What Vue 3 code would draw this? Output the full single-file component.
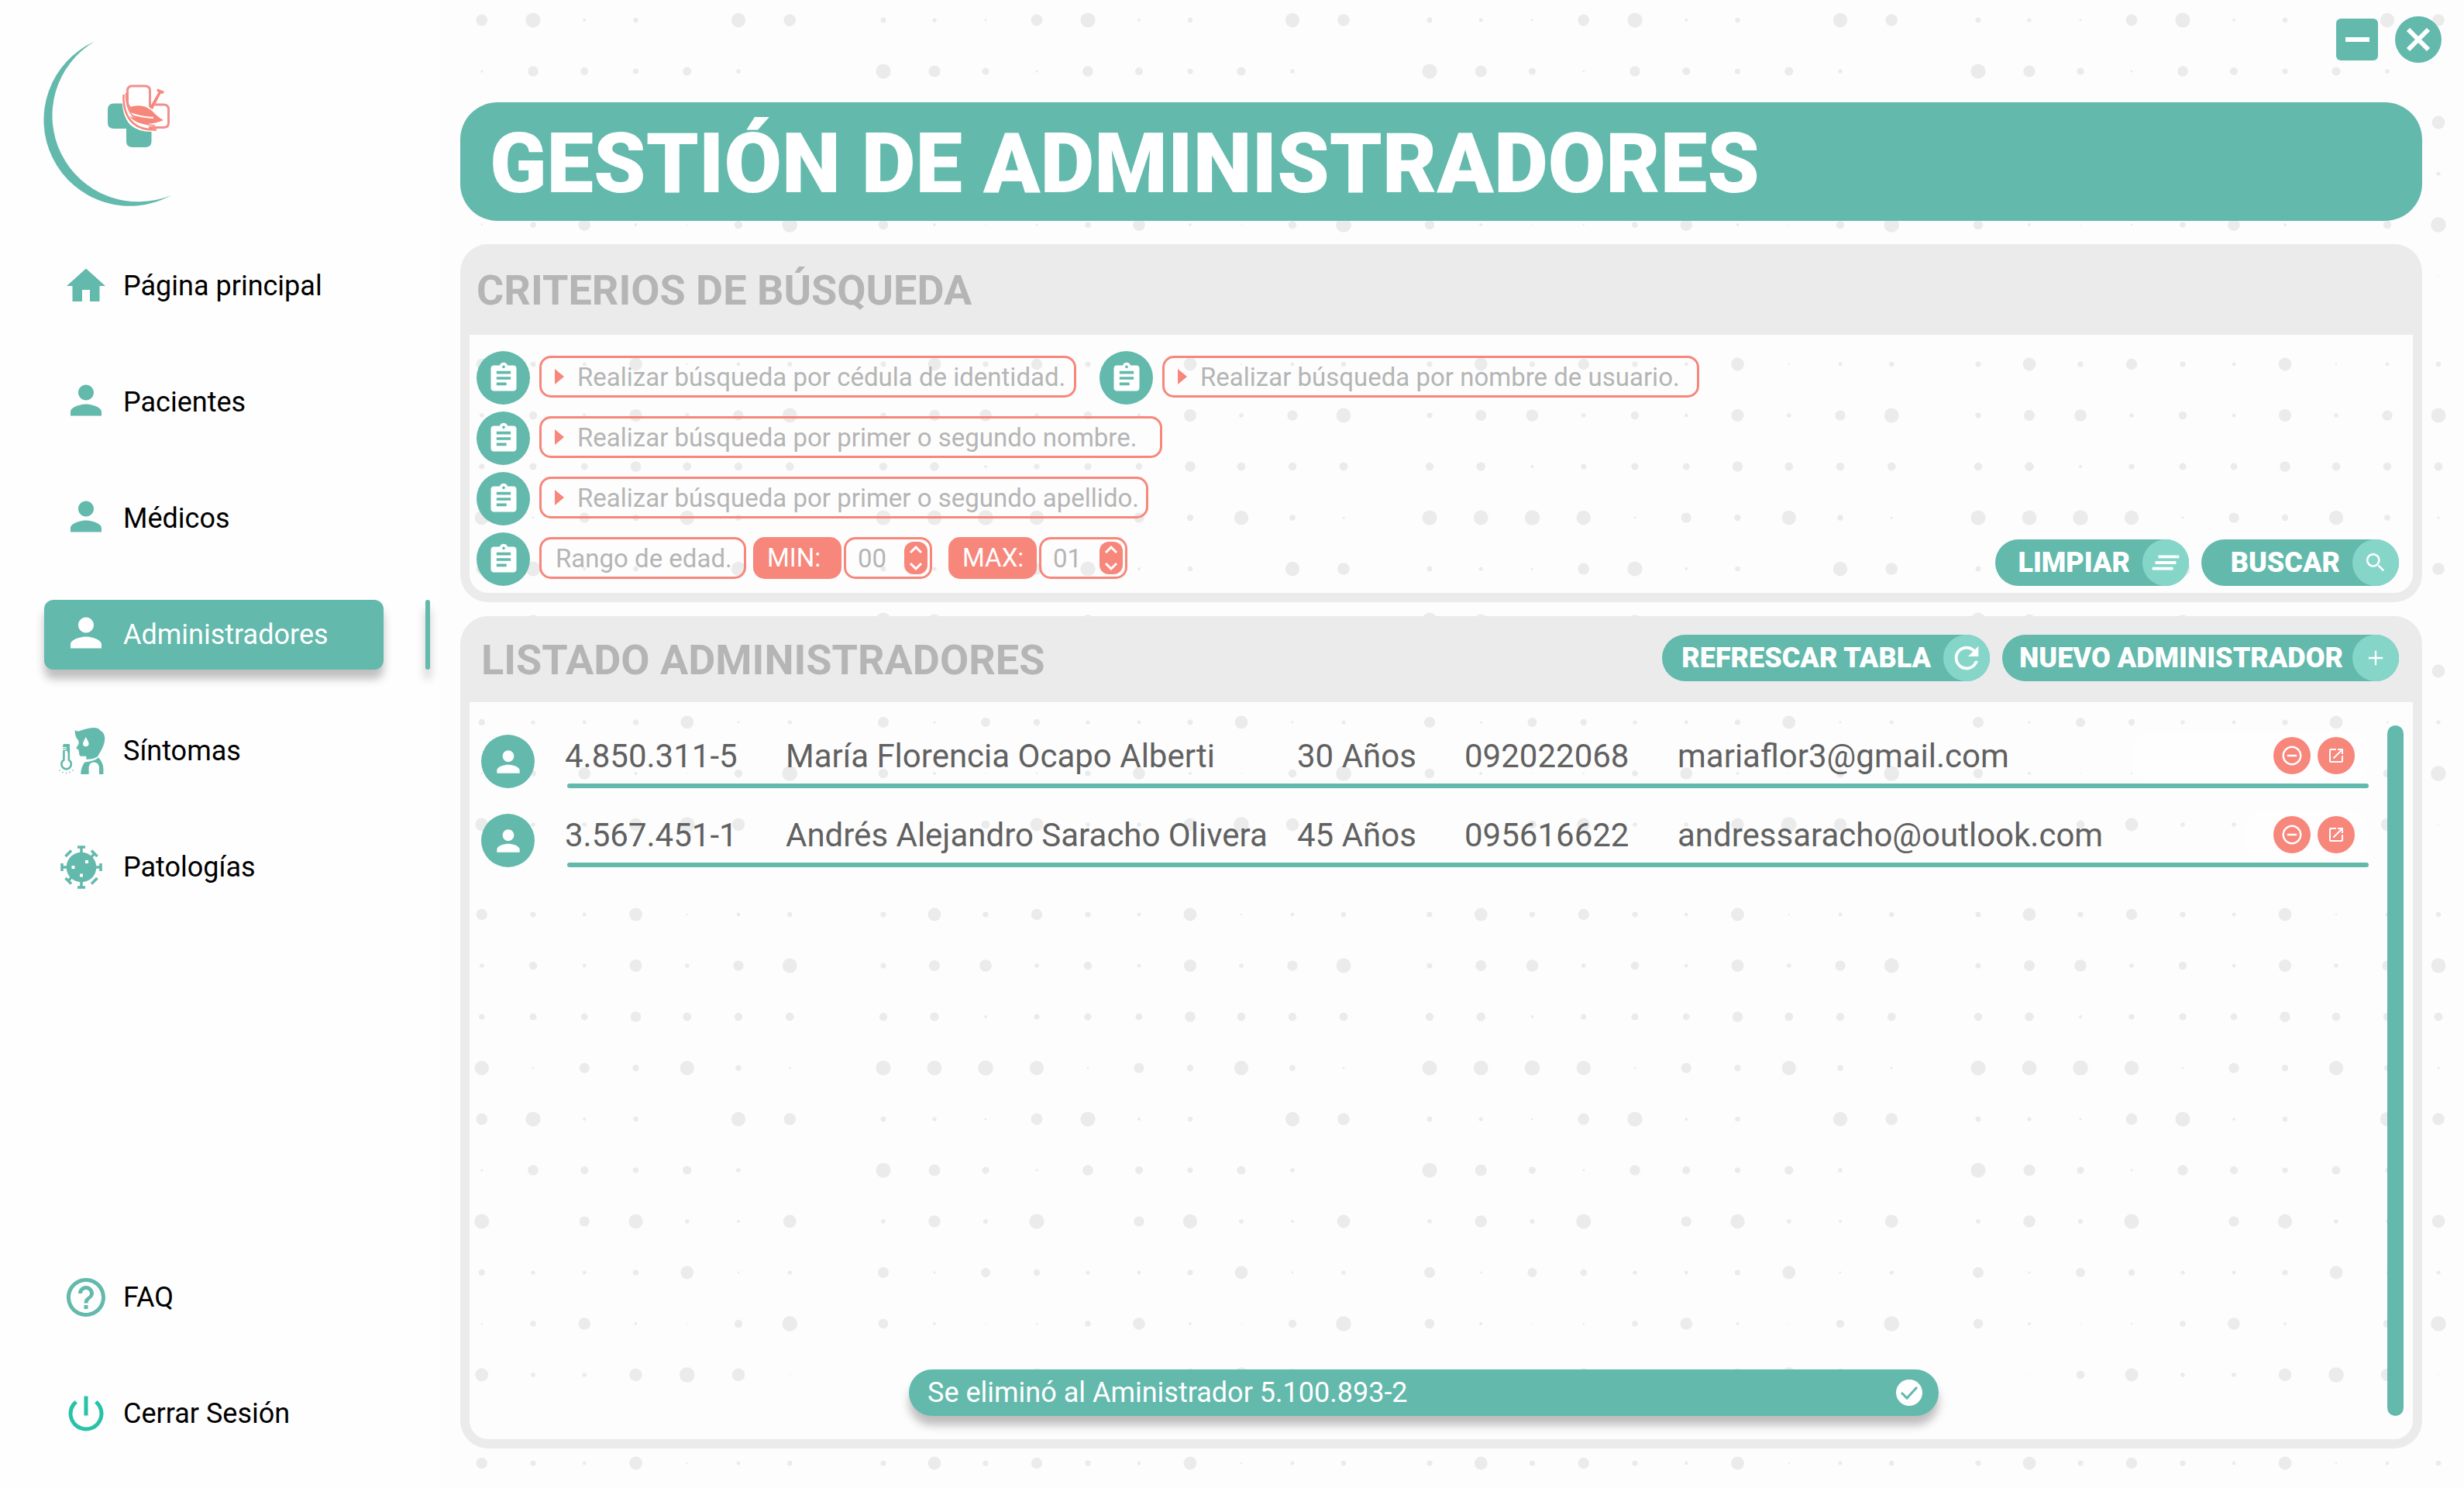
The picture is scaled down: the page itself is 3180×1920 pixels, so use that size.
<script setup>
import { ref } from 'vue'

const menu = [
  { label: 'Página principal', icon: 'home' },
  { label: 'Pacientes', icon: 'person' },
  { label: 'Médicos', icon: 'person' },
  { label: 'Administradores', icon: 'person', active: true },
  { label: 'Síntomas', icon: 'symptom' },
  { label: 'Patologías', icon: 'virus' },
]

const footerMenu = [
  { label: 'FAQ', icon: 'help' },
  { label: 'Cerrar Sesión', icon: 'power' },
]

const searchRows = [
  [
    { id: 'cedula', hint: 'Realizar búsqueda por cédula de identidad.', size: 'medium' },
    { id: 'usuario', hint: 'Realizar búsqueda por nombre de usuario.', size: 'medium' },
  ],
  [{ id: 'nombre', hint: 'Realizar búsqueda por primer o segundo nombre.', size: 'large' }],
  [{ id: 'apellido', hint: 'Realizar búsqueda por primer o segundo apellido.', size: 'wide' }],
]

const admins = [
  { id: '4.850.311-5', name: 'María Florencia Ocapo Alberti', age: '30 Años', phone: '092022068', email: 'mariaflor3@gmail.com' },
  { id: '3.567.451-1', name: 'Andrés Alejandro Saracho Olivera', age: '45 Años', phone: '095616622', email: 'andressaracho@outlook.com' },
]

const filters = ref({ cedula: '', usuario: '', nombre: '', apellido: '', min: '', max: '' })

const paths = {
  home: 'M10 20v-6h4v6h5v-8h3L12 3 2 12h3v8z',
  person: 'M12 12c2.21 0 4-1.79 4-4s-1.79-4-4-4-4 1.79-4 4 1.79 4 4 4zm0 2c-2.67 0-8 1.34-8 4v2h16v-2c0-2.66-5.33-4-8-4z',
  help: 'M11 18h2v-2h-2v2zm1-16C6.48 2 2 6.48 2 12s4.48 10 10 10 10-4.48 10-10S17.52 2 12 2zm0 18c-4.41 0-8-3.59-8-8s3.59-8 8-8 8 3.59 8 8-3.59 8-8 8zm0-14c-2.21 0-4 1.79-4 4h2c0-1.1.9-2 2-2s2 .9 2 2c0 2-3 1.75-3 5h2c0-2.25 3-2.5 3-5 0-2.21-1.79-4-4-4z',
  power: 'M13 3h-2v10h2V3zm4.83 2.17l-1.42 1.42A6.92 6.92 0 0 1 19 12c0 3.87-3.13 7-7 7A6.995 6.995 0 0 1 7.58 6.58L6.17 5.17A8.932 8.932 0 0 0 3 12a9 9 0 0 0 18 0c0-2.74-1.23-5.18-3.17-6.83z',
  clipboard: 'M19 3h-4.18C14.4 1.84 13.3 1 12 1c-1.3 0-2.4.84-2.82 2H5c-1.1 0-2 .9-2 2v14c0 1.1.9 2 2 2h14c1.1 0 2-.9 2-2V5c0-1.1-.9-2-2-2zm-7 0c.55 0 1 .45 1 1s-.45 1-1 1-1-.45-1-1 .45-1 1-1zm2 14H7v-2h7v2zm3-4H7v-2h10v2zm0-4H7V7h10v2z',
}

// Halftone backdrop: one 10x10 block of dots repeated over the main area.
const radii = [
  [9, 21, 9, 18, 9, 6, 21, 3, 6, 8],
  [9, 17.5, 19.5, 7, 13, 6, 20, 7, 16.5, 23.5],
  [13, 14.5, 5, 9, 11.5, 11, 17, 13.5, 13, 13.5],
  [24, 23.5, 24.5, 23, 3.5, 16.5, 10.5, 23, 9.5, 4],
  [8.5, 6.5, 4, 18.5, 24, 5, 8, 1.5, 23, 19.5],
  [24, 19, 11.5, 4, 17, 12.5, 9, 14, 7, 0],
  [7, 19.5, 7.5, 24, 1, 16.5, 23, 7, 5, 21],
  [17.5, 4, 15, 10.5, 6.5, 6, 9, 21, 3.5, 6.5],
  [15.5, 5, 2, 3, 9.5, 19.5, 5, 2, 13, 24.5],
  [0, 2, 13.5, 21, 7, 7, 20.5, 24.5, 20.5, 2],
]
const blockColumns = [
  { x: -143, step: 66.25 },
  { x: 574, step: 66 },
  { x: 1279, step: 66.25 },
  { x: 1987, step: 66 },
]
const blockRows = [-238, 470, 1180, 1888]
const dots = blockColumns.flatMap((col) =>
  blockRows.flatMap((top) =>
    radii.flatMap((line, row) =>
      line.map((r, i) => ({ x: col.x + i * col.step, y: top + row * 66, r: r * 0.4 }))
    )
  )
).filter((d) => d.r > 0 && d.x > 0 && d.y > 0)
</script>

<template>
  <div class="app">
    <aside class="sidebar">
      <svg class="logo" viewBox="0 0 280 280" role="img" aria-label="Logotipo">
        <path class="teal" d="M122 53.500A111 111 0 1 0 221 252A111.200 111.200 0 0 1 122 53.500z" />
        <path class="teal" d="M147 133.500H170V158H195.500V182Q195.500 190 187.500 190H171Q163 190 163 182V166H147Q139 166 139 158V141.500Q139 133.500 147 133.500z" />
        <path fill="#fff" d="M158 122L164 108H198V133H218V166.500L204 169.500Q180 172 168 161Q156 148 158 122z" />
        <g fill="none" stroke="#f0908b" stroke-width="3">
          <path d="M168 139Q164.500 136 164.500 131V117Q164.500 111 170.500 111H187.500Q193.500 111 193.500 117V138" />
          <path d="M200 135H211Q217.500 135 217.500 141V158.500Q217.500 164.500 211 164.500H193.500V168" />
        </g>
        <path class="coral" d="M167 138.500Q178 134.500 188 138Q195 141 200 147Q205 152 211 155Q203 159 190 160Q175 160 167 150Q172 152 175 152Q166 146 167 138.500z" />
        <path fill="none" stroke="#fff" stroke-width="2" d="M168 146Q180 151 198 152" />
        <path class="coral" d="M203 114.500L212 118L210.500 121L207.500 120.500L197 141L193 139L204.500 119L202.500 117.500z" />
        <path fill="none" stroke="#f7867b" stroke-width="2.500" d="M159.500 122Q158.500 147 172 159Q182 168 202 167.500" />
        <path fill="none" stroke="#f7867b" stroke-width="1.500" d="M162.500 120Q162 140 173 152Q182 161 200 162" />
      </svg>

      <nav class="menu" aria-label="Principal">
        <div v-for="item in menu" :key="item.label" class="menu-row" :class="{ active: item.active }">
          <a href="#" class="menu-link" :aria-current="item.active ? 'page' : undefined">
            <svg v-if="item.icon === 'symptom'" class="menu-icon" viewBox="5 0 60 60" aria-hidden="true">
              <path d="M20.700 2.900Q23 4.800 26 4.500Q35 .5 45 0Q51 0 53 3.200Q59 6 59.300 13.600Q59.500 23 49.700 37.500Q45 40.500 35.600 41L35.200 36.800H28.500Q26 36 26 31.400L25.300 28.600 22.200 26.500 25.600 20.700 25.300 16.400Q20.500 12 20.700 2.900zM34.800 12Q30.800 19 31 20.500A3.800 3.800 0 0 0 38.600 20.500Q38.800 19 34.800 12z" fill-rule="evenodd" />
              <path d="M33.300 44.600Q45 43.500 51.300 38.600Q57.400 46 57.400 53V60H52V51Q51 44.600 45 44.600Q39.600 44.600 38.600 51V60H28.300Q28 52 33.300 44.600z" />
              <path fill="none" stroke="currentColor" stroke-width="2.600" d="M6.400 29V41.600A6.300 6.300 0 1 0 12.800 41.600V24" />
              <path d="M5.200 22.500Q5.200 21 7 21H14V32H11V30H5.500V28.700H10V27.500H5.200V26.200H10V25H5.200z" />
              <g>
                <circle cx="1" cy="55" r=".8" /><circle cx="5" cy="57.500" r=".8" /><circle cx="9.600" cy="58.500" r=".8" />
                <circle cx="14" cy="57.500" r=".8" /><circle cx="18" cy="55" r=".8" />
              </g>
            </svg>
            <svg v-else-if="item.icon === 'virus'" class="menu-icon" viewBox="-24 -30 60 60" aria-hidden="true">
              <circle r="19.300" />
              <g fill="none" stroke="currentColor" stroke-width="3.500">
                <path d="M-5 -26H5M0 -26V26M-5 26H5M-25 -5V5M-25 0H25M25 -5V5" />
                <path d="M-20.500 -14L-13 -21.500M20.500 14L13 21.500M13 -21.500L20.500 -14M17 -18L12 -12M-13 21.500L-20.500 14M-17 18L-12 12" />
              </g>
              <path fill="#fff" d="M5 -9h4v4h-4zM-12.500 -2h4v4h-4zM-2 8.500h4v4h-4z" />
            </svg>
            <svg v-else class="menu-icon" :viewBox="item.icon === 'person' ? '0 1 24 24' : '0 0 24 24'" aria-hidden="true">
              <path :d="paths[item.icon]" />
            </svg>
            {{ item.label }}
          </a>
          <span v-if="item.active" class="indicator"></span>
        </div>
      </nav>

      <nav class="menu menu-footer" aria-label="Sesión">
        <div v-for="item in footerMenu" :key="item.label" class="menu-row">
          <a href="#" class="menu-link">
            <svg class="menu-icon" :class="item.icon" viewBox="0 0 24 24" aria-hidden="true">
              <path :d="paths[item.icon]" />
            </svg>
            {{ item.label }}
          </a>
        </div>
      </nav>
    </aside>

    <main class="main">
      <svg class="backdrop" aria-hidden="true">
        <circle v-for="(d, i) in dots" :key="i" :cx="d.x" :cy="d.y" :r="d.r" />
      </svg>

      <div class="window-bar">
        <button type="button" class="window-btn minimize" aria-label="Minimizar">
          <svg viewBox="0 0 54 54"><path d="M12 27H43" /></svg>
        </button>
        <button type="button" class="window-btn close" aria-label="Cerrar">
          <svg viewBox="0 0 60 60"><path d="M17 17L43 43M43 17L17 43" /></svg>
        </button>
      </div>

      <div class="content">
        <h1 class="title">GESTIÓN DE ADMINISTRADORES</h1>

        <section class="panel">
          <header class="panel-head search-head">
            <h2>CRITERIOS DE BÚSQUEDA</h2>
          </header>
          <form class="search-body" @submit.prevent>
            <div class="fields">
              <div v-for="(row, i) in searchRows" :key="i" class="field-row">
                <div v-for="f in row" :key="f.id" class="field">
                  <span class="badge"><svg viewBox="0 0 24 24"><path :d="paths.clipboard" /></svg></span>
                  <label class="box" :class="f.size">
                    <svg class="caret" viewBox="0 0 12 20"><path d="M0 0L12 10L0 20z" /></svg>
                    <input v-model="filters[f.id]" type="text" :name="f.id" :placeholder="f.hint" :aria-label="f.hint" />
                  </label>
                </div>
              </div>
              <div class="field-row">
                <div class="field">
                  <span class="badge"><svg viewBox="0 0 24 24"><path :d="paths.clipboard" /></svg></span>
                  <span class="box range">Rango de edad.</span>
                </div>
                <div class="ages">
                  <div v-for="a in [{ id: 'min', label: 'MIN:', hint: '00' }, { id: 'max', label: 'MAX:', hint: '01' }]" :key="a.id" class="age">
                    <label class="tag" :for="a.id">{{ a.label }}</label>
                    <div class="box number">
                      <input :id="a.id" v-model="filters[a.id]" type="text" inputmode="numeric" :placeholder="a.hint" />
                      <div class="spinner">
                        <button type="button" aria-label="Aumentar"><svg viewBox="0 0 18 12"><path d="M2 10L9 3L16 10" /></svg></button>
                        <button type="button" aria-label="Disminuir"><svg viewBox="0 0 18 12"><path d="M2 2L9 9L16 2" /></svg></button>
                      </div>
                    </div>
                  </div>
                </div>
              </div>
            </div>
            <div class="actions">
              <button type="reset" class="pill limpiar">
                LIMPIAR
                <span class="pill-icon"><svg viewBox="0 0 24 24"><path d="M5 13h14v-2H5v2zm-2 4h14v-2H3v2zM7 7v2h14V7H7z" /></svg></span>
              </button>
              <button type="submit" class="pill buscar">
                BUSCAR
                <span class="pill-icon"><svg viewBox="-6 -6 36 36"><path class="line" d="M14.800 14.800L20 20M15.500 9.500A6 6 0 1 1 3.500 9.500A6 6 0 1 1 15.500 9.500z" /></svg></span>
              </button>
            </div>
          </form>
        </section>

        <section class="panel list-panel">
          <header class="panel-head list-head">
            <h2>LISTADO ADMINISTRADORES</h2>
            <div class="actions">
              <button type="button" class="pill refrescar">
                REFRESCAR TABLA
                <span class="pill-icon"><svg viewBox="0 0 24 24"><path d="M17.650 6.350A7.958 7.958 0 0 0 12 4c-4.420 0-7.990 3.580-7.990 8s3.570 8 7.990 8c3.730 0 6.840-2.550 7.730-6h-2.080A5.990 5.990 0 0 1 12 18c-3.310 0-6-2.690-6-6s2.690-6 6-6c1.660 0 3.140.690 4.220 1.780L13 11h7V4l-2.350 2.350z" /></svg></span>
              </button>
              <button type="button" class="pill nuevo">
                NUEVO ADMINISTRADOR
                <span class="pill-icon"><svg viewBox="0 0 24 24"><path d="M7.200 11.400h4.200V7.200h1.200v4.200h4.200v1.200h-4.200v4.200h-1.200v-4.200H7.200z" /></svg></span>
              </button>
            </div>
          </header>
          <div class="list-body">
            <table>
              <tbody>
                <tr v-for="a in admins" :key="a.id">
                  <td class="avatar-cell"><span class="badge"><svg viewBox="0 0 24 24"><path :d="paths.person" /></svg></span></td>
                  <td>{{ a.id }}</td>
                  <td>{{ a.name }}</td>
                  <td>{{ a.age }}</td>
                  <td>{{ a.phone }}</td>
                  <td>{{ a.email }}</td>
                  <td class="row-actions">
                    <button type="button" aria-label="Eliminar">
                      <svg class="remove" viewBox="0 0 24 24"><path d="M7 11v2h10v-2H7zm5-9C6.480 2 2 6.480 2 12s4.480 10 10 10 10-4.480 10-10S17.520 2 12 2zm0 18c-4.410 0-8-3.590-8-8s3.590-8 8-8 8 3.590 8 8-3.590 8-8 8z" /></svg>
                    </button>
                    <button type="button" aria-label="Abrir">
                      <svg class="open" viewBox="0 0 24 24"><path d="M19 19H5V5h7V3H5a2 2 0 0 0-2 2v14a2 2 0 0 0 2 2h14c1.100 0 2-.9 2-2v-7h-2v7zM14 3v2h3.590l-9.830 9.830 1.410 1.410L19 6.410V10h2V3h-7z" /></svg>
                    </button>
                  </td>
                </tr>
              </tbody>
            </table>
            <div class="scroll-thumb"></div>
          </div>
          <div class="toast" role="status">
            Se eliminó al Aministrador 5.100.893-2
            <svg viewBox="0 0 34 34" aria-hidden="true"><circle cx="17" cy="17" r="17" /><path d="M7 17L14 24L27 10" /></svg>
          </div>
        </section>
      </div>
    </main>
  </div>
</template>

<style>
body {
  background: #fefefe;
}
</style>

<style scoped>
.app {
  --teal: #62b9ac;
  --mint: #85d6c9;
  --coral: #f7867b;
  --frame: #ebebeb;
  --muted: #b5b5b5;
  display: flex;
  min-height: 100vh;
  font-family: Roboto, "Liberation Sans", sans-serif;
  color: #000;
}

.app *,
.app *::before,
.app *::after {
  box-sizing: border-box;
}

button,
input {
  font: inherit;
  border: 0;
  padding: 0;
  background: none;
}

/* Sidebar */
.sidebar {
  flex: 0 0 566px;
  display: flex;
  flex-direction: column;
  padding-bottom: 51px;
}

.logo {
  width: 280px;
  height: 280px;
  margin-bottom: 44px;
}

.teal {
  fill: var(--teal);
}

.coral {
  fill: var(--coral);
}

.menu {
  display: flex;
  flex-direction: column;
  gap: 60px;
}

.menu-footer {
  margin-top: auto;
}

.menu-row {
  display: flex;
  justify-content: space-between;
  height: 90px;
  padding: 0 11px 0 57px;
}

.menu-link {
  display: flex;
  align-items: center;
  gap: 18px;
  width: 438px;
  padding-left: 24px;
  border-radius: 12px;
  font-size: 36px;
  color: inherit;
  text-decoration: none;
}

.menu-icon {
  width: 60px;
  height: 60px;
  overflow: visible;
  fill: currentColor;
  color: var(--teal);
}

.menu-icon.power {
  color: #27c2a8;
}

.active .menu-link {
  background: var(--teal);
  color: #fff;
  box-shadow: 0 12px 12px rgba(0, 0, 0, 0.25);
}

.active .menu-icon {
  color: #fff;
}

.indicator {
  width: 6px;
  border-radius: 3px;
  background: var(--teal);
  box-shadow: 0 12px 12px rgba(0, 0, 0, 0.25);
}

/* Main area */
.main {
  position: relative;
  flex: 1;
  min-width: 0;
  display: flex;
  flex-direction: column;
  overflow: hidden;
  background: #fdfdfd;
}

.backdrop {
  position: absolute;
  inset: 0;
  width: 100%;
  height: 100%;
  fill: var(--frame);
}

.window-bar {
  position: relative;
  display: flex;
  justify-content: flex-end;
  align-items: center;
  gap: 22px;
  height: 60px;
  margin: 21px 29px 51px;
}

.window-btn {
  background: var(--teal);
}

.window-btn svg {
  display: block;
  width: 100%;
  height: 100%;
  fill: none;
  stroke: #fff;
  stroke-width: 6;
}

.minimize {
  width: 54px;
  height: 54px;
  border-radius: 6px;
}

.close {
  width: 60px;
  height: 60px;
  border-radius: 50%;
}

.content {
  position: relative;
  flex: 1;
  display: flex;
  flex-direction: column;
  padding: 0 54px 51px 28px;
}

.title {
  margin: 0 0 30px;
  padding: 6px 38px 0;
  border-radius: 48px;
  background: var(--teal);
  color: #fff;
  font-size: 108px;
  font-weight: 900;
  line-height: 147px;
}

.panel {
  position: relative;
  border: 12px solid var(--frame);
  border-top: 0;
  border-radius: 36px;
}

.list-panel {
  flex: 1;
  display: flex;
  flex-direction: column;
  margin-top: 18px;
}

.panel-head {
  display: flex;
  justify-content: space-between;
  background: var(--frame);
  margin: 0 -1px;
  border-radius: 24px 24px 0 0;
}

.search-head {
  height: 117px;
  padding: 27px 10px 0;
}

.list-head {
  height: 111px;
  padding: 24px 19px 0 16px;
}

.panel-head h2 {
  margin: 0;
  color: var(--muted);
  font-size: 54px;
  font-weight: 700;
  line-height: 66px;
}

/* Search form */
.search-body {
  display: flex;
  justify-content: space-between;
  align-items: flex-end;
  padding: 21px 18px 9px 9px;
}

.fields {
  display: flex;
  flex-direction: column;
  gap: 9px;
}

.field-row {
  display: flex;
  gap: 30px;
}

.field {
  display: flex;
  align-items: center;
  gap: 12px;
}

.badge {
  display: flex;
  align-items: center;
  justify-content: center;
  width: 69px;
  height: 69px;
  border-radius: 50%;
  background: var(--teal);
}

.badge svg {
  width: 44px;
  height: 44px;
  fill: #fff;
}

.box {
  display: flex;
  align-items: center;
  height: 54px;
  margin-bottom: 3px;
  border: 3px solid var(--coral);
  border-radius: 15px;
  font-size: 33px;
  color: var(--muted);
}

.box input {
  flex: 1;
  min-width: 0;
  height: 100%;
  color: #616161;
  outline: none;
}

.box input::placeholder {
  color: var(--muted);
  opacity: 1;
}

.caret {
  width: 12px;
  height: 20px;
  margin: 0 17px;
  fill: var(--coral);
}

.medium {
  width: 693px;
}

.large {
  width: 804px;
}

.wide {
  width: 786px;
}

.range {
  width: 267px;
  padding-left: 18px;
}

.ages {
  display: flex;
  gap: 21px;
  margin-left: -21px;
}

.age {
  display: flex;
  align-items: center;
  gap: 3px;
}

.tag {
  width: 114px;
  margin-bottom: 3px;
  padding-left: 18px;
  border-radius: 15px;
  background: var(--coral);
  color: #fff;
  font-size: 33px;
  line-height: 54px;
}

.number {
  width: 114px;
  padding: 0 3px 0 15px;
}

.spinner {
  display: flex;
  flex-direction: column;
  justify-content: space-between;
  align-items: center;
  width: 30px;
  height: 42px;
  padding: 4px 0;
  border-radius: 12px;
  background: var(--coral);
}

.spinner button,
.spinner svg {
  display: block;
  width: 18px;
  height: 12px;
}

.spinner svg {
  fill: none;
  stroke: #fff;
  stroke-width: 3;
}

/* Pill buttons */
.actions {
  display: flex;
  gap: 16px;
}

.pill {
  display: flex;
  align-items: center;
  justify-content: flex-end;
  gap: 16px;
  height: 60px;
  border-radius: 30px;
  background: var(--teal);
  color: #fff;
  font-size: 36px;
  font-weight: 900;
  white-space: nowrap;
}

.limpiar {
  width: 250px;
}

.buscar {
  width: 255px;
}

.refrescar {
  width: 423px;
}

.nuevo {
  gap: 12px;
  width: 512px;
}

.pill-icon {
  display: flex;
  align-items: center;
  justify-content: center;
  width: 60px;
  height: 60px;
  border-radius: 50%;
  background: var(--mint);
}

.pill-icon svg {
  width: 46px;
  height: 46px;
  fill: #fff;
}

.pill-icon .line {
  fill: none;
  stroke: #fff;
  stroke-width: 2;
}

/* Administrators list */
.list-body {
  flex: 1;
  display: flex;
  gap: 24px;
  padding: 30px 12px 30px 15px;
}

table {
  flex: 1;
  display: block;
  padding-top: 12px;
  font-size: 42px;
  color: #616161;
}

tbody {
  display: flex;
  flex-direction: column;
  gap: 33px;
}

tr {
  display: grid;
  grid-template-columns: 108px 285px 660px 216px 275px 1fr auto;
  grid-template-rows: 54px 6px;
  row-gap: 9px;
  align-items: center;
}

tr::after {
  content: "";
  grid-column: 2 / -1;
  grid-row: 2;
  height: 6px;
  margin-left: 3px;
  border-radius: 3px;
  background: var(--teal);
}

td {
  padding: 0;
  white-space: nowrap;
}

.avatar-cell {
  grid-row: 1 / 3;
}

.row-actions {
  display: flex;
  align-items: center;
  gap: 9px;
  height: 63px;
  padding: 0 18px 0 36px;
  border-radius: 24px;
  background: #fefefe;
}

tr:first-child .row-actions {
  padding-left: 183px;
}

.row-actions button {
  display: flex;
  align-items: center;
  justify-content: center;
  width: 48px;
  height: 48px;
  border-radius: 50%;
  background: var(--coral);
}

.row-actions svg {
  fill: #fff;
}

.remove {
  width: 30px;
  height: 30px;
}

.open {
  width: 24px;
  height: 24px;
}

.scroll-thumb {
  width: 21px;
  border-radius: 11px;
  background: var(--teal);
}

.toast {
  position: absolute;
  left: 0;
  right: 0;
  bottom: 30px;
  display: flex;
  align-items: center;
  justify-content: space-between;
  width: 53%;
  height: 60px;
  margin: 0 auto 0 567px;
  padding: 0 21px 0 24px;
  border-radius: 30px;
  background: var(--teal);
  color: #fff;
  font-size: 36px;
  box-shadow: 0 12px 12px rgba(0, 0, 0, 0.25);
}

.toast svg {
  width: 34px;
  height: 34px;
  fill: #fff;
}

.toast path {
  fill: none;
  stroke: var(--teal);
  stroke-width: 3;
}
</style>
